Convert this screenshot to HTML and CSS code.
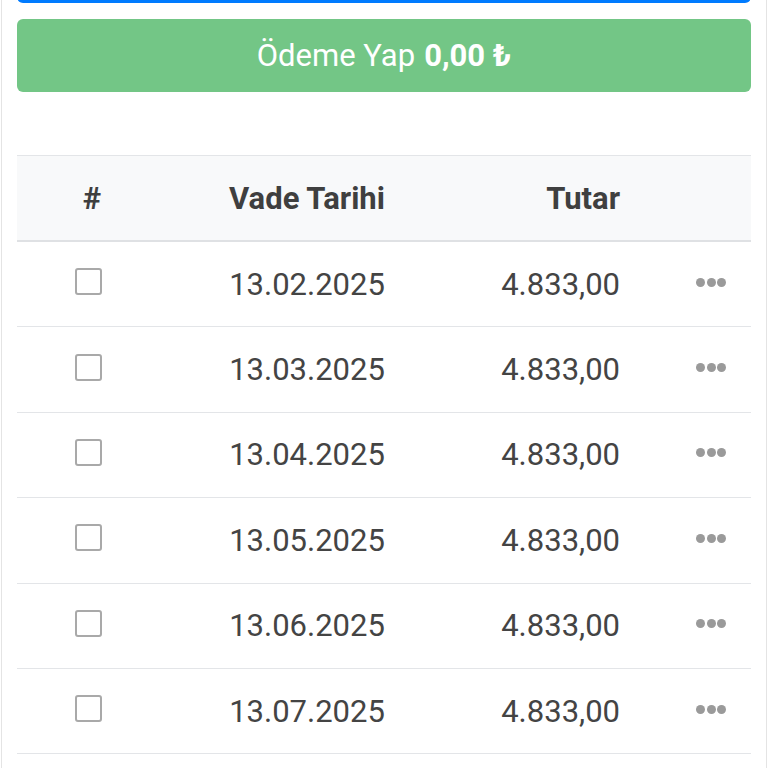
FILE: index.html
```html
<!DOCTYPE html>
<html lang="tr">
<head>
<meta charset="utf-8">
<title>Ödeme</title>
<link rel="stylesheet" href="styles.css">
</head>
<body>
<div class="card">
  <div class="btn-top"></div>
  <button class="btn-pay" disabled>Ödeme Yap <b>0,00 ₺</b></button>
  <div class="table">
    <div class="thead">
      <div class="cell">#</div>
      <div class="cell">Vade Tarihi</div>
      <div class="cell amount">Tutar</div>
      <div class="cell"></div>
    </div>
    <div class="row"><div class="cell"><span class="check"></span></div><div class="cell">13.02.2025</div><div class="cell amount">4.833,00</div><div class="cell"><span class="dots"><i></i><i></i><i></i></span></div></div>
    <div class="row"><div class="cell"><span class="check"></span></div><div class="cell">13.03.2025</div><div class="cell amount">4.833,00</div><div class="cell"><span class="dots"><i></i><i></i><i></i></span></div></div>
    <div class="row"><div class="cell"><span class="check"></span></div><div class="cell">13.04.2025</div><div class="cell amount">4.833,00</div><div class="cell"><span class="dots"><i></i><i></i><i></i></span></div></div>
    <div class="row"><div class="cell"><span class="check"></span></div><div class="cell">13.05.2025</div><div class="cell amount">4.833,00</div><div class="cell"><span class="dots"><i></i><i></i><i></i></span></div></div>
    <div class="row"><div class="cell"><span class="check"></span></div><div class="cell">13.06.2025</div><div class="cell amount">4.833,00</div><div class="cell"><span class="dots"><i></i><i></i><i></i></span></div></div>
    <div class="row"><div class="cell"><span class="check"></span></div><div class="cell">13.07.2025</div><div class="cell amount">4.833,00</div><div class="cell"><span class="dots"><i></i><i></i><i></i></span></div></div>
  </div>
</div>
</body>
</html>
```
FILE: styles.css
```css
html, body {
  margin: 0;
  padding: 0;
  background: #fff;
  overflow: hidden;
}
body {
  font-family: Roboto, "Liberation Sans", sans-serif;
  color: #444;
}
.card {
  margin: 0 1px 0 1px;
  border-left: 1px solid #e4e4e4;
  border-right: 1px solid #e4e4e4;
  padding: 0 15px;
  min-height: 900px;
  box-sizing: border-box;
}
.btn-top {
  height: 43px;
  margin-top: -40px;
  background: #007bff;
  border-radius: 6px;
}
.btn-pay {
  display: flex;
  align-items: center;
  justify-content: center;
  gap: 9px;
  width: 100%;
  height: 73px;
  margin-top: 16px;
  border: 0;
  border-radius: 6px;
  background: #73c686;
  color: #fff;
  font-family: Roboto, "Liberation Sans", sans-serif;
  font-size: 31px;
  font-weight: 400;
  padding: 0;
}
.btn-pay b {
  font-weight: 700;
}
.table {
  margin-top: 63px;
}
.thead, .row {
  display: grid;
  grid-template-columns: 150px 280px 224px 80px;
  align-items: center;
  box-sizing: border-box;
}
.thead {
  height: 87px;
  background: #f8f9fa;
  border-top: 1px solid #e3e5e8;
  border-bottom: 2px solid #dfe1e4;
  font-size: 31px;
  font-weight: 700;
  color: #3f3f3f;
}
.row {
  height: 85.4px;
  border-bottom: 1px solid #e3e5e8;
  font-size: 31px;
}
.cell {
  display: flex;
  justify-content: center;
  align-items: center;
}
.cell.amount {
  justify-content: flex-end;
  padding-right: 51px;
}
.check {
  width: 27px;
  height: 27px;
  box-sizing: border-box;
  border: 2px solid #a9a9a9;
  border-radius: 3px;
  margin-right: 8px;
  margin-bottom: 5px;
}
.dots {
  display: flex;
  gap: 1.5px;
  margin-bottom: 4px;
}
.dots i {
  width: 9px;
  height: 9px;
  border-radius: 50%;
  background: #9a9a9a;
}
```
